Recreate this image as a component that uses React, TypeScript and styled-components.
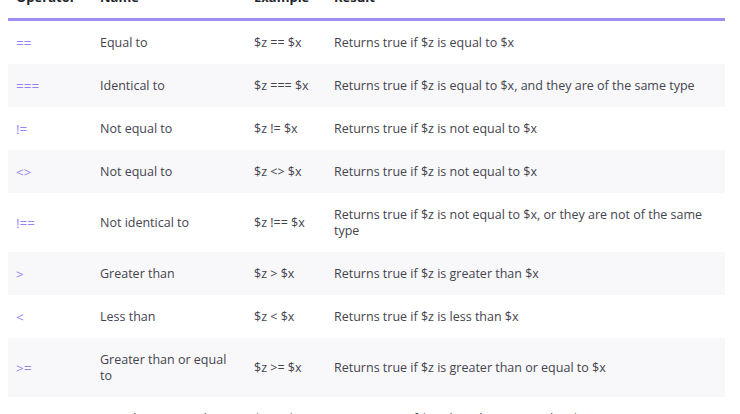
import React from "react";
import styled, { createGlobalStyle } from "styled-components";

const Global = createGlobalStyle`
  html, body { margin: 0; padding: 0; background: #ffffff; overflow: hidden; }
  body { font-family: "Open Sans", "Noto Sans", sans-serif; }
`;

const Page = styled.div`
  padding: 0 15px 0 8px;
  margin-top: -24px;
`;

const Table = styled.table`
  width: 717px;
  border-collapse: collapse;
  table-layout: fixed;
  font-size: 12.5px;
  line-height: 16px;
  color: #44444e;
`;

const HeadCell = styled.th`
  text-align: left;
  font-weight: 700;
  font-size: 13px;
  color: #23232b;
  padding: 13px 8px;
  border-bottom: 3px solid #a08cf6;
`;

const Row = styled.tr<{ $alt: boolean }>`
  background: ${(p) => (p.$alt ? "#f8f8fa" : "#ffffff")};
`;

const Cell = styled.td`
  padding: 13.5px 8px;
  vertical-align: middle;
`;

const OpCell = styled(Cell)`
  color: #9a84f4;
  font-size: 13.5px;
`;

const rows: [string, string, string, string][] = [
  ["==", "Equal to", "$z == $x", "Returns true if $z is equal to $x"],
  ["===", "Identical to", "$z === $x", "Returns true if $z is equal to $x, and they are of the same type"],
  ["!=", "Not equal to", "$z != $x", "Returns true if $z is not equal to $x"],
  ["<>", "Not equal to", "$z <> $x", "Returns true if $z is not equal to $x"],
  ["!==", "Not identical to", "$z !== $x", "Returns true if $z is not equal to $x, or they are not of the same type"],
  [">", "Greater than", "$z > $x", "Returns true if $z is greater than $x"],
  ["<", "Less than", "$z < $x", "Returns true if $z is less than $x"],
  [">=", "Greater than or equal to", "$z >= $x", "Returns true if $z is greater than or equal to $x"],
  ["<=", "Less than or equal to", "$z <= $x", "Returns true if $z is less than or equal to $x"],
];

export default function App() {
  return (
    <>
      <Global />
      <Page>
        <Table>
          <colgroup>
            <col style={{ width: 84 }} />
            <col style={{ width: 154 }} />
            <col style={{ width: 80 }} />
            <col style={{ width: 399 }} />
          </colgroup>
          <thead>
            <tr>
              <HeadCell>Operator</HeadCell>
              <HeadCell>Name</HeadCell>
              <HeadCell>Example</HeadCell>
              <HeadCell>Result</HeadCell>
            </tr>
          </thead>
          <tbody>
            {rows.map((r, i) => (
              <Row key={i} $alt={i % 2 === 1}>
                <OpCell>{r[0]}</OpCell>
                <Cell>{r[1]}</Cell>
                <Cell>{r[2]}</Cell>
                <Cell>{r[3]}</Cell>
              </Row>
            ))}
          </tbody>
        </Table>
      </Page>
    </>
  );
}
